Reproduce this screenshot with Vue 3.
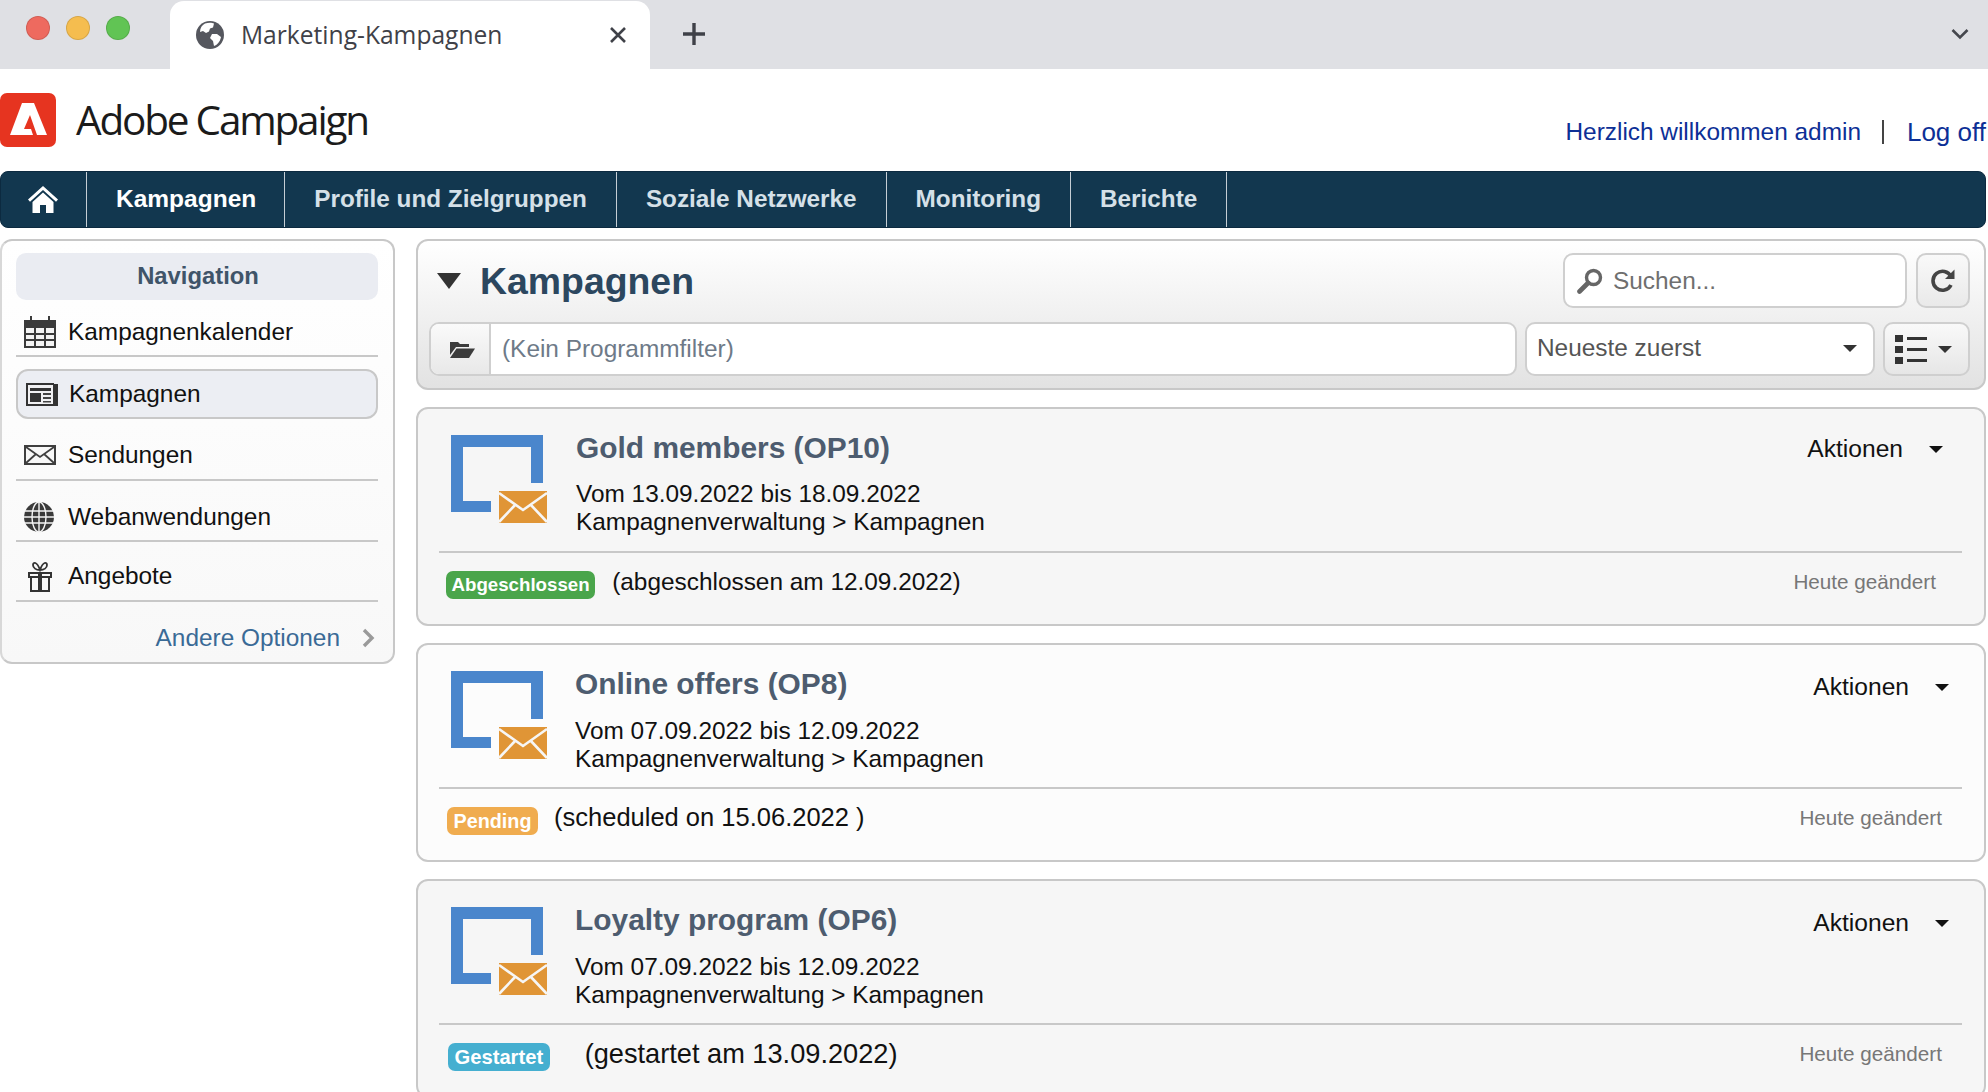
<script setup>
const navItems = ['Kampagnen', 'Profile und Zielgruppen', 'Soziale Netzwerke', 'Monitoring', 'Berichte']
const campaigns = [
  { title: 'Gold members (OP10)', dates: 'Vom 13.09.2022 bis 18.09.2022', badge: 'Abgeschlossen', tone: 'done', note: '(abgeschlossen am 12.09.2022)', layout: 'lead' },
  { title: 'Online offers (OP8)', dates: 'Vom 07.09.2022 bis 12.09.2022', badge: 'Pending', tone: 'pending', note: '(scheduled on 15.06.2022 )', layout: 'light' },
  { title: 'Loyalty program (OP6)', dates: 'Vom 07.09.2022 bis 12.09.2022', badge: 'Gestartet', tone: 'started', note: '(gestartet am 13.09.2022)', layout: 'plain' }
]
</script>

<template>
  <div class="page">
    <div class="tabstrip">
      <div class="lights"><i class="red"></i><i class="amber"></i><i class="green"></i></div>
      <div class="tab">
        <svg class="tab-globe" viewBox="0 0 28 28"><circle cx="14" cy="14" r="14" fill="#55575e"/><path d="M9 2.500c3-1 7-1 9 0l-1 4-3 1-1 3-3 1.500-3-2-3 1c0-4 2-7 5-8.500zM16 13l5 0 4 3c-1 5-4 8-7 9l-1-5-3-3z" fill="#fff"/></svg>
        <span class="tab-title">Marketing-Kampagnen</span>
        <svg class="tab-close" viewBox="0 0 18 16"><path d="M2 1l14 14M16 1L2 15" stroke="#3f4148" stroke-width="2.600" fill="none"/></svg>
      </div>
      <svg class="tab-plus" viewBox="0 0 24 24"><path d="M12 1v22M1 12h22" stroke="#3f4148" stroke-width="3.400" fill="none"/></svg>
      <svg class="tab-more" viewBox="0 0 18 12"><path d="M1.500 2l7.500 7.500L16.500 2" stroke="#45474d" stroke-width="2.600" fill="none"/></svg>
    </div>

    <header class="brand">
      <div class="brand-left">
        <svg class="logo" viewBox="0 0 56 54"><rect width="56" height="54" rx="7" fill="#e63420"/><path d="M22 10H34L47 42H37L30 22 24 36H31L33 42H10Z" fill="#fff"/></svg>
        <span class="brand-name">Adobe Campaign</span>
      </div>
      <div class="welcome">
        <span class="user-link">Herzlich willkommen admin</span>
        <span class="pipe"></span>
        <span class="user-link logoff">Log off</span>
      </div>
    </header>

    <nav class="topnav">
      <div class="home">
        <svg viewBox="0 0 30 27"><path d="M15 0L0 13.500l2 2.200L15 4l13 11.700 2-2.200z" fill="#fff"/><path d="M15 6.500L4.500 16v11H12v-8h6v8h7.500V16z" fill="#fff"/></svg>
      </div>
      <div v-for="(item, i) in navItems" :key="item" class="nav-item" :class="{ on: i === 0 }">{{ item }}</div>
    </nav>

    <main class="main">
      <aside class="side">
        <div class="side-head">Navigation</div>
        <div class="row r1">
          <svg class="ic" viewBox="0 0 32 32"><path d="M0 4h32v28H0z" fill="#3b3b3b"/><path d="M6 0h2v6H6zM24 0h2v6h-2z" fill="#3b3b3b"/><path d="M2 12h8v5H2zM12 12h8v5h-8zM22 12h8v5h-8zM2 19h8v4H2zM12 19h8v4h-8zM22 19h8v4h-8zM2 25h8v5H2zM12 25h8v5h-8zM22 25h8v5h-8z" fill="#f4f4f4"/></svg>
          <span>Kampagnenkalender</span>
        </div>
        <div class="row selected">
          <svg class="ic news" viewBox="0 0 32 24"><path d="M0 1h28v1h4v22H0z" fill="#333"/><path d="M2 3h25v19H2z" fill="#f0f0f2"/><path d="M4 6h21v3H4z" fill="#333"/><path d="M4 11h11v9H4z" fill="#333"/><path d="M17 11h8v2h-8zM17 15h8v2h-8zM17 19h8v1.500h-8z" fill="#444"/></svg>
          <span>Kampagnen</span>
        </div>
        <div class="row r3">
          <svg class="ic" viewBox="0 0 32 20"><rect x="1" y="1" width="30" height="18" fill="#f8f8f8" stroke="#3f3f3f" stroke-width="2"/><path d="M2 2l14 10L30 2M2 18l10-9M30 18L20 9" fill="none" stroke="#3f3f3f" stroke-width="1.800"/></svg>
          <span>Sendungen</span>
        </div>
        <div class="row r4">
          <svg class="ic" viewBox="0 0 32 32"><circle cx="16" cy="16" r="15" fill="#3a3a3a"/><g fill="none" stroke="#f5f5f5" stroke-width="1.400"><ellipse cx="16" cy="16" rx="7" ry="15"/><path d="M16 1v30M2 10h28M1 16h30M2 22h28"/></g></svg>
          <span>Webanwendungen</span>
        </div>
        <div class="row r5">
          <svg class="ic gift" viewBox="0 0 28 32"><path d="M2 12h24v6h-2v14H4V18H2z" fill="#333"/><path d="M6 18h6v12H6zM16 18h6v12h-6zM4 14h8v2H4zM16 14h8v2h-8z" fill="#f8f8f8"/><path d="M14 10C10 10 7 8 7 5s4-4 7 5c3-9 7-8 7-5s-3 5-7 5z" fill="none" stroke="#333" stroke-width="1.800"/></svg>
          <span>Angebote</span>
        </div>
        <div class="more">
          <span>Andere Optionen</span>
          <svg viewBox="0 0 14 20"><path d="M3 2l8 8-8 8" fill="none" stroke="#9a9a9a" stroke-width="3.400"/></svg>
        </div>
      </aside>

      <section class="content">
        <div class="toolbar">
          <div class="tool-row first">
            <i class="collapse"></i>
            <h1>Kampagnen</h1>
            <div class="search">
              <svg viewBox="0 0 26 26"><circle cx="16.500" cy="9.500" r="7" fill="none" stroke="#666" stroke-width="3.400"/><path d="M11 15L2.500 23.500" stroke="#666" stroke-width="4.600" stroke-linecap="round"/></svg>
              <span>Suchen...</span>
            </div>
            <div class="refresh">
              <svg viewBox="0 0 26 26"><path d="M21 17a9.500 9.500 0 1 1 0-8.500" fill="none" stroke="#444" stroke-width="3.600"/><path d="M24.500 1.500V11h-9.500z" fill="#444"/></svg>
            </div>
          </div>
          <div class="tool-row">
            <div class="filter">
              <div class="folder">
                <svg viewBox="0 0 26 20"><path d="M1 3h8l2 2h9v3H7L1 16z" fill="#3c3c3c"/><path d="M7.500 9.500H26L20 19H1z" fill="#3c3c3c"/></svg>
              </div>
              <span>(Kein Programmfilter)</span>
            </div>
            <div class="sort"><span>Neueste zuerst</span><i class="caret grey"></i></div>
            <div class="view">
              <svg viewBox="0 0 32 29"><path d="M0 0h8v7H0zM0 11h8v7H0zM0 22h8v7H0zM12 2h20v3H12zM12 13h20v3H12zM12 24h20v3H12z" fill="#333"/></svg>
              <i class="caret grey"></i>
            </div>
          </div>
        </div>

        <article v-for="c in campaigns" :key="c.title" class="card" :class="c.layout">
          <div class="card-top">
            <svg class="camp-ic" viewBox="0 0 96 88">
              <path d="M0 0h92v48H80V12H12v54h28v11H0z" fill="#4a86cc"/>
              <path d="M48 56h48v32H48z" fill="#e09536"/>
              <path d="M48 58l24 17 24-17M48 87l17-18M96 87L79 69" fill="none" stroke="#f6f6f6" stroke-width="2.600"/>
            </svg>
            <div class="card-text">
              <h2>{{ c.title }}</h2>
              <p class="dates">{{ c.dates }}</p>
              <p class="path">Kampagnenverwaltung &gt; Kampagnen</p>
            </div>
            <div class="action"><span>Aktionen</span><i class="caret black"></i></div>
          </div>
          <div class="card-bottom">
            <span class="badge" :class="c.tone">{{ c.badge }}</span>
            <span class="note" :class="c.tone">{{ c.note }}</span>
            <span class="changed">Heute geändert</span>
          </div>
        </article>
      </section>
    </main>
  </div>
</template>

<style scoped>
.page {
  width: 1988px;
  height: 1092px;
  overflow: hidden;
  background: #fff;
  font-family: "Liberation Sans", Arial, sans-serif;
  font-size: 24.4px;
  color: #111;
}
.tabstrip {
  height: 69px;
  background: #dfe0e4;
  display: flex;
  align-items: flex-end;
  position: relative;
}
.lights {
  width: 170px;
  height: 69px;
  display: flex;
  gap: 16px;
  padding: 16px 0 0 26px;
  box-sizing: border-box;
}
.lights i {
  width: 24px;
  height: 24px;
  border-radius: 50%;
  box-sizing: border-box;
  border: 1px solid rgba(0, 0, 0, .12);
}
.red { background: #ee6a5f; }
.amber { background: #f5bd4f; }
.green { background: #61c454; }
.tab {
  width: 480px;
  height: 68px;
  background: #fff;
  border-radius: 14px 14px 0 0;
  display: flex;
  align-items: center;
  box-sizing: border-box;
  padding: 0 23px 0 26px;
}
.tab-globe { width: 28px; height: 28px; }
.tab-title {
  margin-left: 17px;
  padding-bottom: 2px;
  font-family: "Open Sans", sans-serif;
  font-size: 24.600px;
  color: #3f4148;
  flex: 1;
}
.tab-close { width: 18px; height: 16px; }
.tab-plus {
  width: 24px;
  height: 24px;
  margin: 0 0 23px 32px;
}
.tab-more {
  width: 18px;
  height: 12px;
  margin: 0 19px 29px auto;
}
.brand {
  height: 102px;
  display: flex;
  justify-content: space-between;
  box-sizing: border-box;
  padding-right: 2px;
}
.brand-left {
  display: flex;
  align-items: flex-start;
  padding-top: 24px;
}
.logo { width: 56px; height: 54px; }
.brand-name {
  margin-left: 20px;
  font-family: "Open Sans", sans-serif;
  font-size: 40.500px;
  line-height: 54px;
  letter-spacing: -2.200px;
  color: #1b1b1b;
}
.welcome {
  display: flex;
  align-items: center;
  height: 48px;
  margin-top: 39px;
}
.user-link { color: #0d2f96; }
.logoff { font-size: 26px; }
.pipe {
  width: 2px;
  height: 24px;
  background: #444;
  margin: 0 23px 0 21px;
}
.topnav {
  height: 57px;
  width: 1986px;
  box-sizing: border-box;
  display: flex;
  background: #12374f;
  border: 1px solid #0c2a40;
  border-radius: 8px;
}
.home {
  width: 86px;
  border-right: 1px solid #c5ced5;
  display: flex;
  align-items: center;
  justify-content: center;
  box-sizing: border-box;
  padding-right: 2px;
}
.home svg { width: 30px; height: 27px; }
.nav-item {
  padding: 0 29px;
  line-height: 53px;
  font-weight: 700;
  font-size: 24.300px;
  color: #d5e0e8;
  border-right: 1px solid #c5ced5;
}
.nav-item.on {
  color: #fff;
  font-size: 24.500px;
  padding-right: 28px;
}
.main {
  display: flex;
  gap: 21px;
  padding: 11px 2px 0 0;
  align-items: flex-start;
}
.side {
  width: 395px;
  height: 425px;
  flex: none;
  box-sizing: border-box;
  border: 2px solid #c8c8c8;
  border-left-color: #d8d8d8;
  border-radius: 12px;
  padding: 12px 15px 0 14px;
  background: linear-gradient(#fff, #f8f8f8);
}
.side-head {
  height: 47px;
  line-height: 46px;
  text-align: center;
  padding-left: 2px;
  font-weight: 700;
  font-size: 23.800px;
  color: #3f5469;
  background: #eaecf2;
  border-radius: 10px;
}
.row {
  display: flex;
  align-items: center;
  box-sizing: border-box;
  border-bottom: 2px solid #c8c8c8;
  padding-left: 8px;
}
.row span { margin-left: 12px; }
.ic { width: 32px; flex: none; }
.r1 { height: 57px; padding-top: 8px; }
.r1 .ic { height: 32px; }
.selected {
  height: 50px;
  margin-top: 12px;
  border: 2px solid #c8c8c8;
  border-radius: 12px;
  background: #eceef3;
  padding-left: 8px;
}
.selected .news { width: 32px; height: 24px; }
.selected span { margin-left: 11px; }
.r3 { height: 62px; padding-top: 12px; }
.r3 .ic { height: 20px; }
.r4 { height: 61px; padding-top: 13px; }
.r4 .ic { height: 32px; margin-left: -1px; margin-right: 1px; }
.r5 { height: 60px; padding-top: 10px; }
.r5 .gift { width: 28px; height: 32px; margin: 0 2px; }
.more {
  display: flex;
  justify-content: flex-end;
  align-items: center;
  height: 36px;
  margin-top: 18px;
  color: #3a6a96;
}
.more svg { width: 14px; height: 20px; margin-left: 21px; margin-right: 3px; }
.content {
  flex: 1;
  display: flex;
  flex-direction: column;
  gap: 17px;
}
.toolbar {
  height: 151px;
  box-sizing: border-box;
  border: 2px solid #c8c8c8;
  border-radius: 12px;
  padding: 12px 14px 0 11px;
  background: linear-gradient(#fff, #e2e2e2);
  display: flex;
  flex-direction: column;
  gap: 14px;
}
.tool-row { display: flex; align-items: center; }
.tool-row.first { height: 55px; }
.collapse {
  width: 0;
  height: 0;
  margin-left: 8px;
  border-left: 12px solid transparent;
  border-right: 12px solid transparent;
  border-top: 16px solid #333;
}
h1 {
  margin: 2px 0 0 19px;
  font-size: 37.400px;
  font-weight: 700;
  color: #2c475f;
  flex: 1;
}
.search {
  width: 344px;
  height: 55px;
  box-sizing: border-box;
  border: 2px solid #cfcfcf;
  border-radius: 10px;
  background: #fff;
  display: flex;
  align-items: center;
  padding-left: 12px;
  color: #6f6f6f;
}
.search svg { width: 26px; height: 26px; margin-right: 10px; }
.refresh {
  width: 54px;
  height: 55px;
  margin-left: 9px;
  box-sizing: border-box;
  border: 2px solid #cfcfcf;
  border-radius: 10px;
  background: linear-gradient(#f9f9f9, #e9e9e9);
  display: flex;
  align-items: center;
  justify-content: center;
}
.refresh svg { width: 26px; height: 26px; }
.filter {
  width: 1088px;
  height: 54px;
  box-sizing: border-box;
  border: 2px solid #cfcfcf;
  border-radius: 10px;
  background: #fff;
  display: flex;
  align-items: center;
  color: #6e7a88;
  overflow: hidden;
}
.folder {
  width: 60px;
  height: 100%;
  flex: none;
  background: linear-gradient(#fafafa, #e8e8e8);
  border-right: 2px solid #cfcfcf;
  box-sizing: border-box;
  display: flex;
  align-items: center;
  justify-content: center;
  padding-left: 4px;
}
.folder svg { width: 26px; height: 20px; }
.filter span { margin-left: 11px; }
.sort {
  width: 350px;
  height: 54px;
  margin-left: 8px;
  box-sizing: border-box;
  border: 2px solid #cfcfcf;
  border-radius: 10px;
  background: #fff;
  display: flex;
  align-items: center;
  justify-content: space-between;
  padding: 0 16px 2px 10px;
  color: #555;
}
.view {
  width: 87px;
  height: 54px;
  margin-left: 8px;
  box-sizing: border-box;
  border: 2px solid #cfcfcf;
  border-radius: 10px;
  background: linear-gradient(#f9f9f9, #e6e6e6);
  display: flex;
  align-items: center;
  gap: 11px;
  padding-left: 10px;
}
.view svg { width: 32px; height: 29px; }
.caret {
  width: 0;
  height: 0;
  border-left: 7.500px solid transparent;
  border-right: 7.500px solid transparent;
  display: block;
}
.caret.grey { border-top: 7px solid #333; }
.caret.black { border-top: 7px solid #111; }
.card {
  height: 219px;
  flex: none;
  box-sizing: border-box;
  border: 2px solid #c8c8c8;
  border-radius: 12px;
  background: #f6f6f6;
  padding: 0 22px 0 21px;
}
.card.light { background: #fcfcfc; }
.card-top {
  height: 142px;
  display: flex;
  align-items: flex-start;
  border-bottom: 2px solid #c8c8c8;
  box-sizing: content-box;
}
.camp-ic {
  width: 96px;
  height: 88px;
  flex: none;
  margin: 26px 0 0 12px;
}
.lead .camp-ic { margin-top: 26px; }
.card-text { margin-left: 28px; padding-top: 21px; }
.lead .card-text { margin-left: 29px; padding-top: 21px; }
h2 {
  margin: 0;
  font-size: 29.900px;
  line-height: 36px;
  font-weight: 700;
  color: #4d5c6f;
}
.dates, .path { margin: 0; line-height: 28px; }
.dates { margin-top: 15px; }
.lead .dates { margin-top: 13px; line-height: 29px; }
.action {
  margin-left: auto;
  display: flex;
  align-items: center;
  gap: 26px;
  padding: 28px 13px 0 0;
  font-size: 24.600px;
}
.lead .action { gap: 26px; padding: 26px 19px 0 0; }
.card-bottom {
  display: flex;
  align-items: flex-start;
  padding-top: 14px;
}
.lead .card-bottom { padding-top: 14px; }
.badge {
  margin: 4px 0 0 7px;
  height: 28px;
  line-height: 28px;
  padding: 0 5.500px;
  border-radius: 7px;
  font-size: 18.700px;
  font-weight: 700;
  color: #fff;
  white-space: nowrap;
}
.badge.done { background: #4aa54b; }
.badge.pending { background: #f0ac4f; padding: 0 6.500px; font-size: 19.800px; margin-left: 8px; }
.badge.started { background: #45afd0; padding: 0 6.500px; margin-left: 9px; font-size: 20.200px; }
.note { margin-left: 17px; line-height: 29px; font-size: 24.400px; }
.note.pending { font-size: 25.500px; margin-left: 16px; }
.note.started { margin-left: 35px; font-size: 27.200px; }
.changed {
  margin-left: auto;
  padding-right: 20px;
  font-size: 20.700px;
  line-height: 29px;
  color: #777;
}
.lead .changed { padding-right: 26px; }
</style>

<style>
html, body { margin: 0; overflow: hidden; background: #fff; }
</style>
